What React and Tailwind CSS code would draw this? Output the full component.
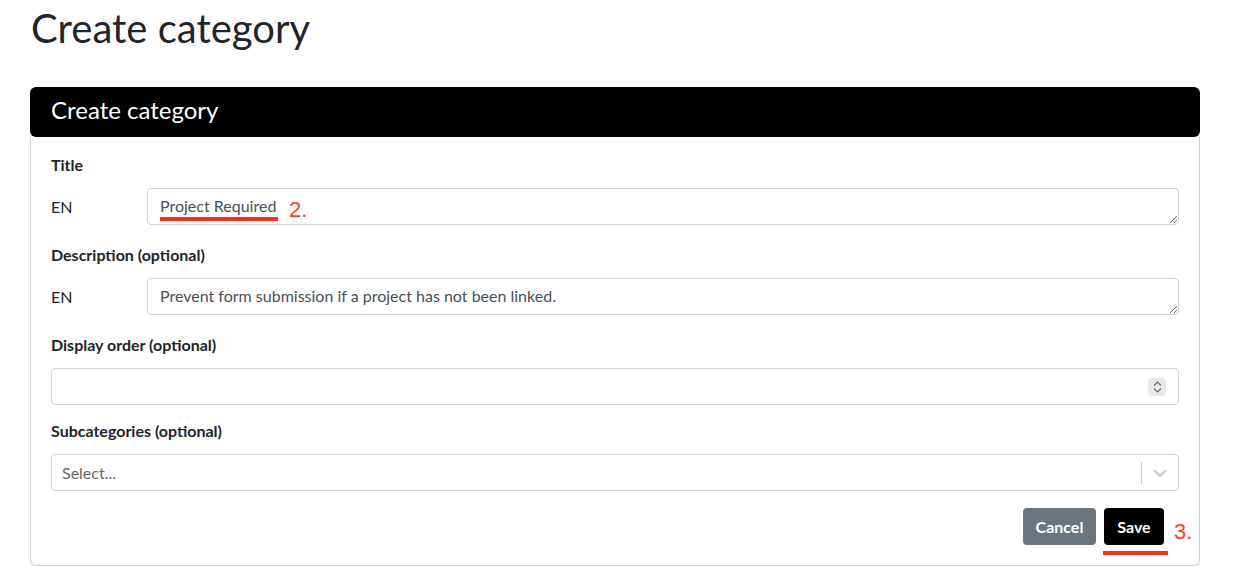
export default function App() {
  return (
    <div className="min-h-screen bg-white px-[30px] pt-1 font-['Lato','Liberation_Sans',sans-serif] text-[#212529]">
      <h1 className="pl-px text-[40px] leading-[48px] font-normal text-[#212529]">Create category</h1>

      <div className="mt-[35px] w-[1170px]">
        <div className="h-[50px] rounded-md bg-black px-5 pb-[4px] flex items-center">
          <h2 className="pl-px text-[24px] leading-none text-white">Create category</h2>
        </div>

        <div className="border border-t-0 border-[#cfcfcf] rounded-b-md px-5 pt-4 pb-5">
          <label className="block text-[16px] leading-6 font-bold">Title</label>
          <div className="mt-[11px] flex items-center">
            <span className="w-[96px] text-[16px]">EN</span>
            <div className="relative flex-1">
              <textarea
                rows={1}
                defaultValue="Project Required"
                className="block w-full h-[37px] rounded border border-[#ced4da] px-3 py-[7px] text-[16px] leading-5 text-[#495057] outline-none"
              />
              <span className="absolute left-[13px] top-[29px] h-[4px] w-[118px] bg-[#ff2d16]" />
              <span className="absolute left-[142px] top-[10px] text-[22px] leading-6 text-[#ff3b30] font-['Liberation_Sans',sans-serif]">2.</span>
            </div>
          </div>

          <label className="block mt-[18px] text-[16px] leading-6 font-bold">Description (optional)</label>
          <div className="mt-[11px] flex items-center">
            <span className="w-[96px] text-[16px]">EN</span>
            <textarea
              rows={1}
              defaultValue="Prevent form submission if a project has not been linked."
              className="block flex-1 h-[37px] rounded border border-[#ced4da] px-3 py-[7px] text-[16px] leading-5 text-[#495057] outline-none"
            />
          </div>

          <label className="block mt-[18px] text-[16px] leading-6 font-bold">Display order (optional)</label>
          <div className="mt-[11px] flex items-center h-[37px] rounded border border-[#ced4da] pr-[12px]">
            <input type="text" className="flex-1 h-full px-3 outline-none text-[16px]" />
            <div className="w-[18px] h-[18px] rounded-sm bg-[#e9e9ed] flex flex-col items-center justify-center">
              <svg width="9" height="5" viewBox="0 0 9 5" fill="none" stroke="#6b6b6b" strokeWidth="1.2">
                <path d="M1 4.5 4.5 1 8 4.5" />
              </svg>
              <svg width="9" height="5" viewBox="0 0 9 5" fill="none" stroke="#6b6b6b" strokeWidth="1.2" className="mt-[2px]">
                <path d="M1 0.5 4.5 4 8 0.5" />
              </svg>
            </div>
          </div>

          <label className="block mt-[14px] text-[16px] leading-6 font-bold">Subcategories (optional)</label>
          <div className="mt-[11px] flex items-center h-[37px] rounded border border-[#ced4da]">
            <span className="flex-1 pl-[10px] text-[16px] text-[#666]">Select...</span>
            <span className="w-px h-[22px] bg-[#cccccc]" />
            <div className="w-[36px] flex justify-center">
              <svg width="14" height="8" viewBox="0 0 14 8" fill="none" stroke="#cccccc" strokeWidth="2">
                <path d="M1 1l6 6 6-6" />
              </svg>
            </div>
          </div>

          <div className="mt-[17px] flex justify-end gap-2 pr-[15px]">
            <button className="h-[37px] w-[73px] rounded bg-[#6c757d] text-white text-[16px] font-bold">Cancel</button>
            <div className="relative">
              <button className="h-[37px] w-[60px] rounded bg-black text-white text-[16px] font-bold">Save</button>
              <span className="absolute left-[-1px] top-[43px] h-[4px] w-[65px] bg-[#ff2d16]" />
              <span className="absolute left-[70px] top-[12px] text-[22px] leading-6 text-[#ff3b30] font-['Liberation_Sans',sans-serif]">3.</span>
            </div>
          </div>
        </div>
      </div>
    </div>
  );
}
